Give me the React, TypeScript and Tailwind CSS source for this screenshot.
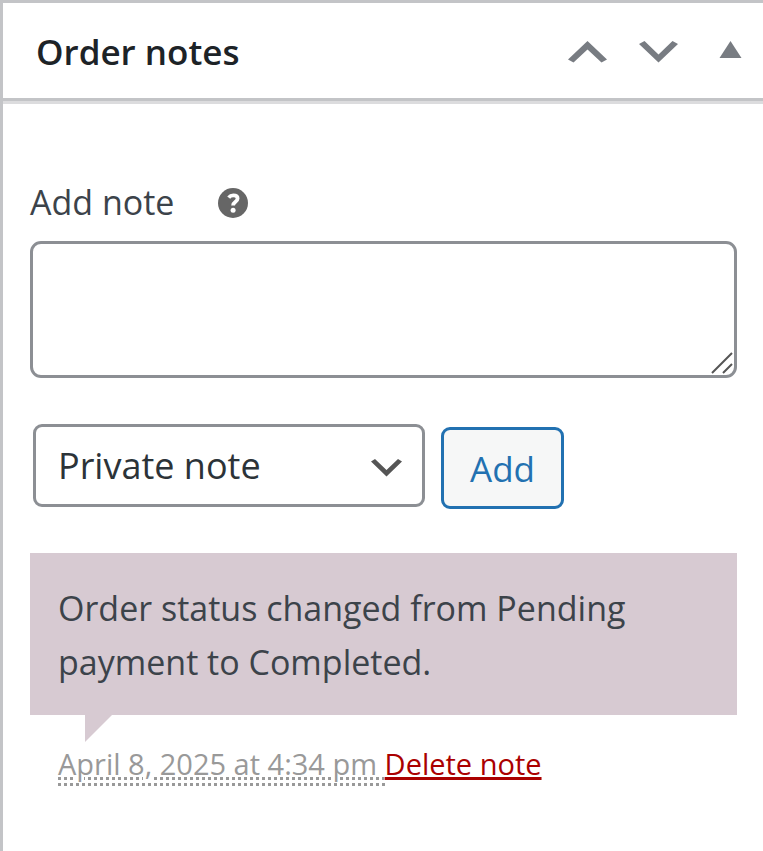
import { useState } from "react";

interface OrderNote {
  id: number;
  content: string;
  date: string;
}

const initialNotes: OrderNote[] = [
  {
    id: 1,
    content: "Order status changed from Pending payment to Completed.",
    date: "April 8, 2025 at 4:34 pm",
  },
];

function PanelHeader({ open, onToggle }: { open: boolean; onToggle: () => void }) {
  return (
    <header className="flex h-[101px] items-center justify-between border-y-3 border-[#c3c4c7] pt-[3px] pr-[21px] pl-[33px] shadow-[0_3px_0_#dcdcde]">
      <h2 className="text-[35px] leading-[48px] font-semibold text-[#1d2327]">Order notes</h2>
      <div className="flex items-center text-[#787c82]">
        <button type="button" aria-label="Move up" className="mr-8 cursor-pointer">
          <svg className="h-[22px] w-[39px]" viewBox="0 0 39 22" fill="currentColor">
            <path d="M19.5 0 39 18.5 33.5 21.5 19.5 8.5 5.5 21.5 0 18.5Z" />
          </svg>
        </button>
        <button type="button" aria-label="Move down" className="mr-[41px] cursor-pointer">
          <svg className="h-[22px] w-[39px]" viewBox="0 0 39 22" fill="currentColor">
            <path d="M19.5 21.5 39 3 33.5 0 19.5 13.5 5.5 0 0 3Z" />
          </svg>
        </button>
        <button type="button" aria-label="Toggle panel" aria-expanded={open} onClick={onToggle} className="cursor-pointer pb-1">
          <svg className="h-[18px] w-[23px]" viewBox="0 0 23 18" fill="currentColor">
            <path d={open ? "M11.5 0 22.5 17H.5Z" : "M.5 0h22L11.5 17Z"} />
          </svg>
        </button>
      </div>
    </header>
  );
}

function HelpTip() {
  return (
    <button type="button" aria-label="Help" className="cursor-help">
      <svg className="size-[30px]" viewBox="0 0 30 30">
        <circle cx="15" cy="15" r="15" fill="#666" />
        <path
          d="M10.7 9.6c1.2-1.5 2.7-2.2 4.6-2.2 2.7 0 4.3 1.2 4.3 3.2 0 3.3-4.5 3-4.5 6.9"
          fill="none"
          stroke="#fff"
          strokeWidth="3.8"
        />
        <circle cx="15.1" cy="22.3" r="2.5" fill="#fff" />
      </svg>
    </button>
  );
}

export default function App() {
  const [open, setOpen] = useState(true);
  const [text, setText] = useState("");
  const [type, setType] = useState("private");
  const [notes, setNotes] = useState(initialNotes);

  const addNote = () => {
    if (!text.trim()) return;
    setNotes([{ id: Date.now(), content: text, date: new Date().toLocaleString("en-US") }, ...notes]);
    setText("");
  };

  return (
    <section className="min-h-screen border-l-3 border-[#c3c4c7] bg-white font-['Open_Sans','Noto_Sans',sans-serif] text-[34px] text-[#3c434a]">
      <PanelHeader open={open} onToggle={() => setOpen(!open)} />

      {open && (
        <div className="pt-[77px] pr-[26px] pb-12 pl-[27px]">
          {/* Add note form */}
          <div className="flex items-center gap-11">
            <label htmlFor="note" className="pb-[2px] leading-[48px]">Add note</label>
            <HelpTip />
          </div>
          <div className="relative mt-[13px]">
            <textarea
              id="note"
              value={text}
              onChange={(e) => setText(e.target.value)}
              className="block h-[137px] w-full resize-none rounded-[11px] border-3 border-[#8c8f94] px-4 py-1 outline-none"
            />
            <svg
              className="pointer-events-none absolute right-1 bottom-1 size-[22px]"
              viewBox="0 0 22 22"
              stroke="#555"
              strokeWidth="2"
            >
              <path d="M1 21 21 1M12 21l9-9" />
            </svg>
          </div>

          <div className="mt-[46px] flex items-start gap-4 pl-[3px]">
            <div className="relative w-[392px]">
              <select
                aria-label="Note type"
                value={type}
                onChange={(e) => setType(e.target.value)}
                className="block h-[83px] w-full appearance-none rounded-[9px] border-3 border-[#8c8f94] bg-white pr-16 pl-[22px] text-[36px] text-[#2c3338]"
              >
                <option value="private">Private note</option>
                <option value="customer">Note to customer</option>
              </select>
              <svg
                className="pointer-events-none absolute top-[35px] right-[23px] h-[18px] w-[31px]"
                viewBox="0 0 31 18"
                fill="#555"
              >
                <path d="M15.5 17.5 31 2.5 27 0 15.5 11 4 0 0 2.5Z" />
              </svg>
            </div>
            <button
              type="button"
              onClick={addNote}
              className="mt-[3px] h-[82px] w-[123px] cursor-pointer rounded-[9px] border-3 border-[#2271b1] bg-[#f6f7f7] pt-[2px] text-[35px] text-[#2271b1]"
            >
              Add
            </button>
          </div>

          {/* Notes list */}
          <ul className="mt-[44px] space-y-10">
            {notes.map((note) => (
              <li key={note.id}>
                <div className="relative bg-[#d7cad2] px-7 pt-7 pb-[26px] leading-[54px]">
                  <p>{note.content}</p>
                  <svg className="absolute top-full left-[55px] size-[27px]" viewBox="0 0 27 27" fill="#d7cad2">
                    <path d="M0 0h27L0 27Z" />
                  </svg>
                </div>
                <p className="mt-[29px] px-7 text-[29px] leading-[40px] text-[#999]">
                  <abbr className="border-b-3 border-dotted border-[#999] whitespace-pre underline decoration-dotted decoration-3">
                    {note.date + " "}
                  </abbr>
                  <a
                    href="#delete"
                    onClick={(e) => {
                      e.preventDefault();
                      setNotes(notes.filter((n) => n.id !== note.id));
                    }}
                    className="text-[#a00] underline decoration-3"
                  >
                    Delete note
                  </a>
                </p>
              </li>
            ))}
          </ul>
        </div>
      )}
    </section>
  );
}
